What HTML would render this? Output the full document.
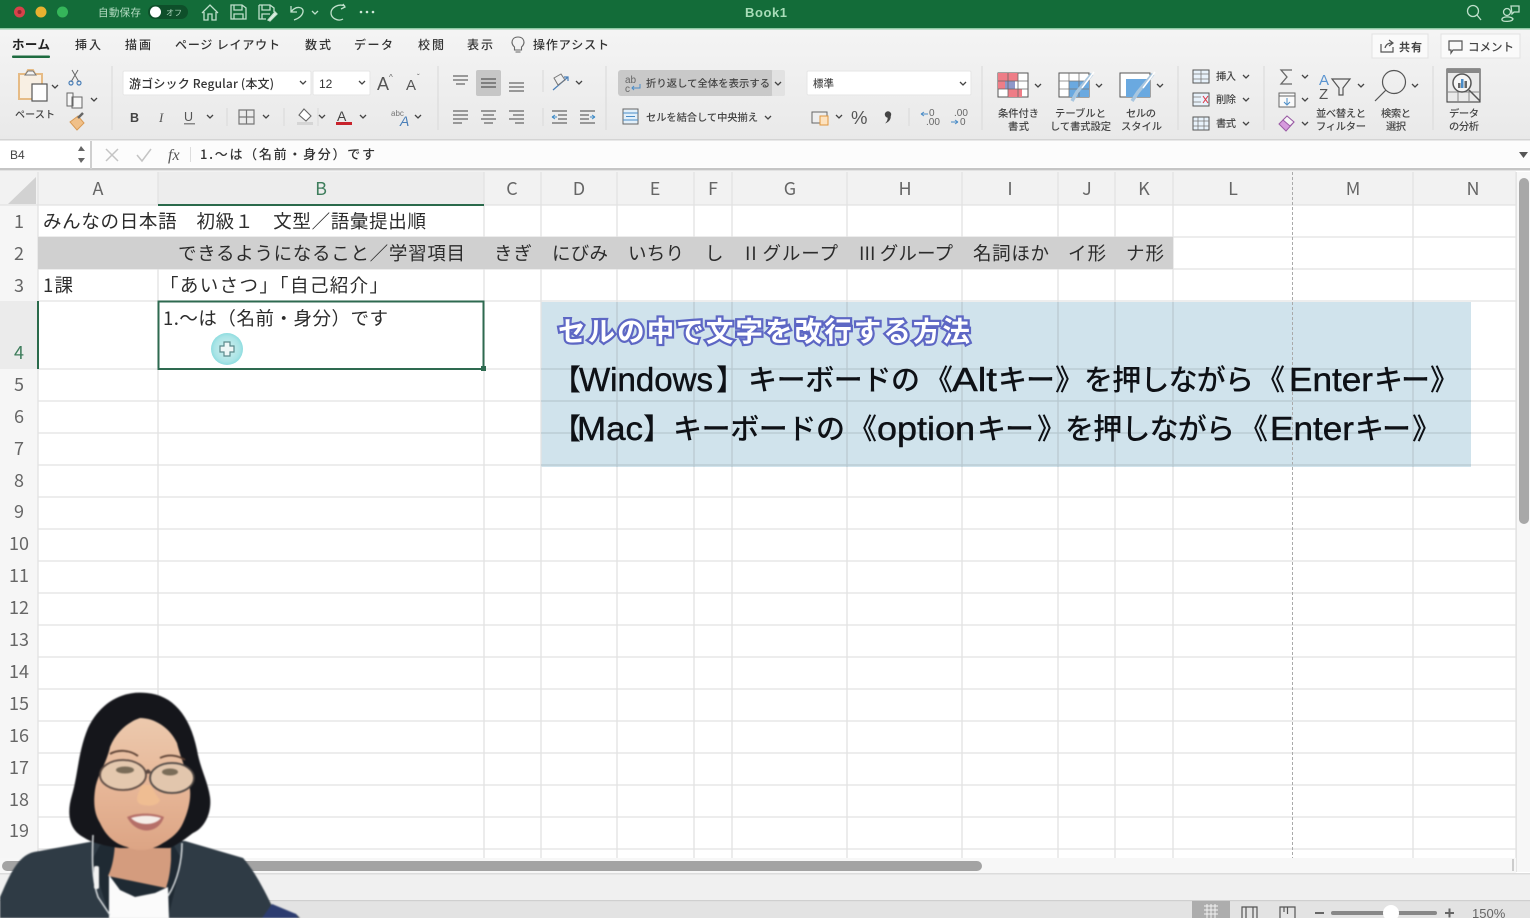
<!DOCTYPE html>
<html lang="ja"><head><meta charset="utf-8"><title>Book1</title>
<style>
html,body{margin:0;padding:0;width:1530px;height:918px;overflow:hidden;background:#fff}
svg{display:block;filter:blur(.35px)}
text{font-family:"Liberation Sans","Noto Sans CJK JP",sans-serif}
.jp,.jp text,.hd text,.rh text{font-family:"Noto Sans CJK JP","Liberation Sans",sans-serif}
.tab{font-size:12px;fill:#333;font-weight:500}
.cell{font-size:18.5px;fill:#2c2c2c}
.hd{font-size:18px;fill:#666;text-anchor:middle}
.rh{font-size:18px;fill:#666;text-anchor:middle}
.ov text{font-size:29px;fill:#0e1116;font-weight:500;font-family:"Noto Sans CJK JP",sans-serif}
.ov text.l{font-size:33px;font-weight:400;font-family:"Liberation Sans",sans-serif;stroke:#0e1116;stroke-width:.45}
.i{fill:none;stroke:#555;stroke-width:1.2}
.ch{fill:none;stroke:#444;stroke-width:1.3}
.g{stroke:#e2e2e2;stroke-width:1.3}
</style></head><body>
<svg width="1530" height="918" viewBox="0 0 1530 918" xmlns="http://www.w3.org/2000/svg">
<defs>
<linearGradient id="rb" x1="0" y1="0" x2="0" y2="1"><stop offset="0" stop-color="#f4f4f4"/><stop offset="1" stop-color="#e9e9e9"/></linearGradient>
<linearGradient id="face" x1="0" y1="0" x2="0" y2="1"><stop offset="0" stop-color="#ecc9ad"/><stop offset=".55" stop-color="#e6b596"/><stop offset="1" stop-color="#dca484"/></linearGradient>
<radialGradient id="cur"><stop offset="0" stop-color="#d5f0f0"/><stop offset=".8" stop-color="#a9e4e6"/><stop offset="1" stop-color="#8fdde0"/></radialGradient>
</defs>

<!-- title bar -->
<rect width="1530" height="28" fill="#136c39"/>
<rect y="28" width="1530" height="1.5" fill="#8fc9a5"/>
<circle cx="19.500" cy="12" r="5.500" fill="#d8424a"/><circle cx="19.500" cy="12" r="2" fill="#8e2730"/>
<circle cx="41" cy="12" r="5.500" fill="#e8b130"/>
<circle cx="62.500" cy="12" r="5.500" fill="#35b65a"/>
<text x="98" y="16" font-size="10.500" fill="#b5dcc3" textLength="43">自動保存</text>
<rect x="148" y="5" width="40" height="14" rx="7" fill="#0e4f2a"/>
<circle cx="155.500" cy="12" r="5.500" fill="#fff"/>
<text x="166" y="15.500" font-size="8" fill="#a9d3b9">オフ</text>
<g fill="none" stroke="#bfe0cb" stroke-width="1.300">
<path d="M202 13 L210 5 L218 13 M204 12 V20 H208 V14 H212 V20 H216 V12"/>
<path d="M231 5 H242 L246 8 V19 H231 Z M234 5 V10 H242 V5 M234 19 V14 H243 V19"/>
<path d="M259 5 H270 L274 8 V12 M259 5 V19 H266 M262 5 V10 H270 V5 M262 19 V14 H270"/>
<path d="M268 20 L275 12 L277 14 L270 21 Z" fill="#e6f2ea"/>
<path d="M291 6 V12 H297 M291 12 C296 5 304 7 303 12 C302 17 297 19 294 20"/>
<path d="M312 11 L315 14 L318 11"/>
<path d="M345 6 C338 3 331 8 331 13 C331 18 338 22 343 19 M343 4 L345 7 L341 9" />
</g>
<g fill="#cfe7d8"><circle cx="361" cy="12" r="1.300"/><circle cx="367" cy="12" r="1.300"/><circle cx="373" cy="12" r="1.300"/></g>
<text x="745" y="17" font-size="13" font-weight="700" fill="#a8dcb8" textLength="42">Book1</text>
<g fill="none" stroke="#bfe0cb" stroke-width="1.300">
<circle cx="1473" cy="11" r="5.500"/><path d="M1477 15 L1481 20"/>
<circle cx="1507" cy="12" r="3.500"/><path d="M1502 20 C1501 16 1512 16 1513 19 C1512 22 1503 22 1502 20 Z"/>
<path d="M1511 6 H1519 V12 H1514 L1512 14 Z"/>
</g>

<!-- ribbon -->
<rect y="29.500" width="1530" height="110" fill="url(#rb)"/>
<rect y="139" width="1530" height="1.500" fill="#d4d4d4"/>
<g class="jp">
<text x="12" y="49" font-size="12.500" font-weight="700" fill="#222" textLength="38">ホーム</text>
<text x="75" y="49" class="tab" textLength="26">挿入</text>
<text x="125" y="49" class="tab" textLength="26">描画</text>
<text x="175" y="49" class="tab" textLength="105">ページ レイアウト</text>
<text x="305" y="49" class="tab" textLength="26">数式</text>
<text x="354" y="49" class="tab" textLength="39">データ</text>
<text x="418" y="49" class="tab" textLength="26">校閲</text>
<text x="467" y="49" class="tab" textLength="26">表示</text>
<text x="533" y="49" class="tab" textLength="76">操作アシスト</text>
</g>
<rect x="12" y="55.500" width="38" height="2.500" rx="1" fill="#1e6b40"/>
<path d="M514.500 47 C510 43 512 37 518 37 C524 37 526 43 521.500 47 V50 H514.500 Z M515.500 52 H520.500" fill="none" stroke="#666" stroke-width="1.100"/>

<!-- share/comment -->
<rect x="1372" y="34" width="56" height="24" fill="#fafafa" stroke="#e2e2e2"/>
<rect x="1441" y="34" width="79" height="24" fill="#fafafa" stroke="#e2e2e2"/>
<path d="M1381 44 V52 H1393 V47 M1385 48 C1386 44 1389 43 1392 43 M1389 40 L1393 43 L1389 46" class="i"/>
<text x="1399" y="51" font-size="11" font-weight="600" fill="#444" textLength="23" class="jp">共有</text>
<path d="M1449 41 H1462 V50 H1453 L1451 53 V50 H1449 Z" class="i"/>
<text x="1468" y="51" font-size="11.500" font-weight="500" fill="#444" textLength="46" class="jp">コメント</text>

<!-- group separators -->
<g stroke="#dcdcdc" stroke-width="1.200">
<path d="M112 66 V130 M438 66 V130 M606 66 V130 M982 66 V130 M1178 66 V130 M1264 66 V130 M1433 66 V130"/>
<path d="M227 108 V126 M284 108 V126 M318 108 V126 M543 70 V92 M543 108 V126 M909 108 V126"/>
</g>

<!-- paste -->
<path d="M19 74 H26 L28 70 H33 L35 74 H42 V99 H19 Z" fill="#f8efe3" stroke="#e6bb85" stroke-width="2"/>
<path d="M25 75 L28 71 H33 L36 75 Z" fill="#f2f2f2" stroke="#777"/>
<rect x="32" y="84" width="15" height="17" fill="#fdfdfd" stroke="#555" stroke-width="1.200"/>
<path d="M52 85 L55 88 L58 85" class="ch"/>
<text x="15" y="118" font-size="10" font-weight="500" fill="#444" textLength="40" class="jp">ペースト</text>
<path d="M72 70 L79 82 M78 70 L71 82" stroke="#666" fill="none"/>
<circle cx="71" cy="83" r="2" fill="none" stroke="#4a7fb8" stroke-width="1.200"/><circle cx="79" cy="83" r="2" fill="none" stroke="#4a7fb8" stroke-width="1.200"/>
<path d="M67 93 H73 V106 H67 Z M72 97 H82 V108 H72 Z" fill="#f7f7f7" stroke="#666"/>
<path d="M91 98 L94 101 L97 98" class="ch"/>
<path d="M70 122 L78 116 L84 123 L77 130 Z" fill="#f0c089" stroke="#d89a55"/>
<path d="M78 118 L83 113" stroke="#666" stroke-width="2.500"/>

<!-- font boxes -->
<rect x="123" y="71" width="188" height="24" rx="1.500" fill="#fff" stroke="#e6e6e6"/>
<text x="129" y="88" font-size="12" font-weight="500" fill="#333" textLength="145" class="jp">游ゴシック Regular (本文)</text>
<path d="M300 81 L303 84 L306 81" class="ch"/>
<rect x="313" y="71" width="57" height="24" rx="1.500" fill="#fff" stroke="#e6e6e6"/>
<text x="319" y="88" font-size="12" fill="#333">12</text>
<path d="M359 81 L362 84 L365 81" class="ch"/>
<text x="377" y="90" font-size="18" fill="#555">A</text><text x="389" y="80" font-size="8" fill="#666">^</text>
<text x="406" y="90" font-size="15" fill="#555">A</text><text x="417" y="80" font-size="8" fill="#666">ˇ</text>

<text x="130" y="122" font-size="12.500" font-weight="700" fill="#444">B</text>
<text x="159" y="122" font-size="13" font-style="italic" fill="#555" style="font-family:'Liberation Serif',serif">I</text>
<text x="184" y="121" font-size="12.500" fill="#555">U</text><rect x="184" y="123" width="11" height="1.500" fill="#888"/>
<path d="M207 115 L210 118 L213 115" class="ch"/>
<path d="M239 110 H254 V124 H239 Z M246.500 110 V124 M239 117 H254" fill="none" stroke="#777" stroke-width="1.200"/>
<path d="M263 115 L266 118 L269 115" class="ch"/>
<path d="M304 109 L311 116 L306 121 L299 115 Z" fill="#fff" stroke="#666" stroke-width="1.100"/>
<rect x="297" y="122" width="16" height="3" fill="#d5d5d5"/>
<path d="M319 115 L322 118 L325 115" class="ch"/>
<text x="337" y="121" font-size="14" fill="#444">A</text><rect x="336" y="122" width="16" height="3" fill="#c8232c"/>
<path d="M360 115 L363 118 L366 115" class="ch"/>
<text x="391" y="116" font-size="8" fill="#777">abc</text>
<text x="400" y="126" font-size="14" font-style="italic" fill="#4a7fb8">A</text>
<path d="M415 115 L418 118 L421 115" class="ch"/>

<!-- align -->
<rect x="476" y="70" width="25" height="26" rx="2" fill="#c6c6c6"/>
<g stroke="#666" stroke-width="1.200">
<path d="M453 76 H468 M453 80 H468 M456 84 H465"/>
<path d="M481 79 H496 M481 83 H496 M481 87 H496" stroke="#555"/>
<path d="M509 83 H524 M509 87 H524 M509 91 H524"/>
<path d="M453 111 H468 M453 115 H468 M453 119 H468 M453 123 H462"/>
<path d="M481 111 H496 M483 115 H494 M481 119 H496 M484 123 H493"/>
<path d="M509 111 H524 M513 115 H524 M509 119 H524 M515 123 H524"/>
<path d="M552 111 H567 M558 115 H567 M558 119 H567 M552 123 H567"/>
<path d="M580 111 H595 M580 115 H589 M580 119 H589 M580 123 H595"/>
</g>
<path d="M552 117 H557 M552 117 L555 115 M552 117 L555 119 M590 117 H595 M595 117 L592 115 M595 117 L592 119" stroke="#3c8ac7" fill="none"/>
<path d="M553 90 L568 77 M564 77 H568 V81" stroke="#4a7fb8" fill="none" stroke-width="1.200"/>
<path d="M554 78 L561 74 L565 80 L558 85 Z" fill="none" stroke="#777"/>
<path d="M576 81 L579 84 L582 81" class="ch"/>

<!-- wrap -->
<rect x="618" y="70" width="156" height="26" rx="3" fill="#c9c9c9"/>
<rect x="772" y="70" width="13" height="26" rx="2" fill="#e2e2e2"/>
<text x="625" y="83" font-size="10" fill="#666">ab</text><text x="625" y="92" font-size="10" fill="#666">c</text>
<path d="M640 84 V88 H632 M634 86 L632 88 L634 90" stroke="#4a8cc7" fill="none"/>
<text x="646" y="87" font-size="10.300" font-weight="500" fill="#444" textLength="124" class="jp">折り返して全体を表示する</text>
<path d="M775 82 L778 85 L781 82" class="ch"/>
<rect x="623" y="109" width="15" height="15" fill="#e3f0fa" stroke="#666"/>
<path d="M623 113 H638 M623 120 H638 M626 116.500 H635" stroke="#4a8cc7" fill="none"/>
<text x="646" y="121" font-size="10.300" font-weight="500" fill="#444" textLength="112" class="jp">セルを結合して中央揃え</text>
<path d="M765 116 L768 119 L771 116" class="ch"/>

<!-- number -->
<rect x="807" y="71" width="164" height="24" rx="1.500" fill="#fff" stroke="#e6e6e6"/>
<text x="813" y="87" font-size="10.500" font-weight="500" fill="#444" class="jp">標準</text>
<path d="M960 82 L963 85 L966 82" class="ch"/>
<rect x="812" y="112" width="15" height="11" fill="#eee" stroke="#666"/>
<rect x="820" y="116" width="8" height="9" fill="#fde2bf" stroke="#e0963e"/>
<path d="M836 115 L839 118 L842 115" class="ch"/>
<text x="851" y="124" font-size="18.500" fill="#555">%</text>
<circle cx="888" cy="114.500" r="3.200" fill="#444"/><path d="M890.500 115 C891.500 119 889 122 885 123.500 C887.500 121 888 119 887.500 116 Z" fill="#444"/>
<text x="929" y="116" font-size="10" fill="#666">0</text><text x="926" y="125" font-size="10" fill="#666">.00</text>
<path d="M921 114 H928 M921 114 L924 112 M921 114 L924 116" stroke="#4a8cc7" fill="none"/>
<text x="954" y="116" font-size="10" fill="#666">.00</text><text x="960" y="125" font-size="10" fill="#666">0</text>
<path d="M951 122 H958 M958 122 L955 120 M958 122 L955 124" stroke="#4a8cc7" fill="none"/>

<!-- cond format -->
<rect x="998" y="73" width="30" height="24" fill="#fff" stroke="#555"/>
<rect x="998" y="73" width="20" height="8" fill="#ee7d87"/><rect x="1005" y="81" width="10" height="8" fill="#8e97c9"/><rect x="998" y="81" width="7" height="8" fill="#ee7d87"/>
<rect x="1008" y="89" width="14" height="8" fill="#ee7d87"/>
<path d="M998 81 H1028 M998 89 H1028 M1008 73 V97 M1018 73 V97" stroke="#666" fill="none" stroke-width=".8"/>
<path d="M1035 84 L1038 87 L1041 84" class="ch"/>
<g class="jp" font-size="10.300" font-weight="500" fill="#444">
<text x="998" y="117" textLength="41">条件付き</text><text x="1008" y="130" textLength="21">書式</text>
<text x="1055" y="117" textLength="51">テーブルと</text><text x="1050" y="130" textLength="61">して書式設定</text>
<text x="1126" y="117" textLength="30">セルの</text><text x="1121" y="130" textLength="41">スタイル</text>
<text x="1216" y="80" textLength="20">挿入</text><text x="1216" y="103" textLength="20">削除</text><text x="1216" y="127" textLength="20">書式</text>
<text x="1316" y="117" textLength="50">並べ替えと</text><text x="1316" y="130" textLength="50">フィルター</text>
<text x="1381" y="117" textLength="30">検索と</text><text x="1386" y="130" textLength="20">選択</text>
<text x="1449" y="117" textLength="30">データ</text><text x="1449" y="130" textLength="30">の分析</text>
</g>
<!-- table format -->
<rect x="1059" y="73" width="30" height="24" fill="#fff" stroke="#555"/>
<rect x="1069" y="81" width="20" height="16" fill="#6aa9e0"/>
<path d="M1059 81 H1089 M1059 89 H1089 M1069 73 V97 M1079 73 V97" stroke="#777" fill="none" stroke-width=".8"/>
<path d="M1092 74 L1077 92 L1072 101" stroke="#a8c6df" stroke-width="3.500" fill="none"/><path d="M1094 72 L1082 88" stroke="#fff" stroke-width="1.500" fill="none"/>
<path d="M1096 84 L1099 87 L1102 84" class="ch"/>
<!-- cell style -->
<rect x="1120" y="73" width="30" height="24" fill="#fff" stroke="#555"/>
<rect x="1126" y="79" width="24" height="18" fill="#6aa9e0"/>
<path d="M1153 74 L1138 92 L1132 101" stroke="#a8c6df" stroke-width="3.500" fill="none"/><path d="M1155 72 L1143 88" stroke="#fff" stroke-width="1.500" fill="none"/>
<path d="M1157 84 L1160 87 L1163 84" class="ch"/>
<!-- insert delete -->
<g fill="#e8f2fb" stroke="#555">
<rect x="1193" y="70" width="16" height="13"/><rect x="1193" y="93" width="16" height="13"/><rect x="1193" y="117" width="16" height="13"/>
</g>
<path d="M1193 74 H1209 M1193 79 H1209 M1201 70 V83 M1193 97 H1201 M1193 102 H1201 M1198 117 V130 M1204 117 V130 M1193 121 H1209 M1193 126 H1209" stroke="#777" fill="none" stroke-width=".8"/>
<path d="M1203 96 L1208 103 M1208 96 L1203 103" stroke="#d34" fill="none"/>
<path d="M1243 75 L1246 78 L1249 75 M1243 98 L1246 101 L1249 98 M1243 122 L1246 125 L1249 122" class="ch"/>
<!-- sum etc -->
<path d="M1292 70 H1281 L1287 77 L1281 84 H1292" fill="none" stroke="#666" stroke-width="1.300"/>
<path d="M1302 75 L1305 78 L1308 75 M1302 98 L1305 101 L1308 98 M1302 122 L1305 125 L1308 122" class="ch"/>
<rect x="1279" y="93" width="16" height="14" fill="#fafafa" stroke="#666"/>
<path d="M1279 96 H1295" stroke="#666"/><path d="M1287 98 V104 M1284 102 L1287 105 L1290 102" stroke="#4a8cc7" fill="none"/>
<path d="M1279 124 L1287 116 L1294 122 L1286 131 Z" fill="#d69add" stroke="#9a5aa5"/>
<path d="M1287 116 L1294 122 L1290 126 L1283 120 Z" fill="#f6f6f6" stroke="#9a5aa5"/>
<text x="1319" y="85" font-size="15" fill="#5a94d0">A</text><text x="1319" y="99" font-size="15" fill="#555">Z</text>
<path d="M1332 79 H1350 L1343 88 V95 H1339 V88 Z" fill="none" stroke="#555" stroke-width="1.200"/>
<path d="M1358 84 L1361 87 L1364 84" class="ch"/>
<circle cx="1394" cy="82" r="11.500" fill="none" stroke="#555" stroke-width="1.200"/>
<path d="M1386 90 L1375 101" stroke="#555" stroke-width="1.200"/>
<path d="M1412 84 L1415 87 L1418 84" class="ch"/>
<rect x="1447" y="69" width="33" height="33" fill="#eaeaea" stroke="#444" stroke-width="1.100"/>
<rect x="1447" y="69" width="33" height="4" fill="#888"/>
<path d="M1447 92 H1480 M1458 90 V102 M1469 90 V102" stroke="#888" fill="none"/>
<circle cx="1462" cy="83" r="9" fill="#f5f5f5" stroke="#555" stroke-width="1.500"/>
<rect x="1458" y="83" width="2.500" height="5" fill="#666"/><rect x="1461" y="79" width="2.500" height="9" fill="#4a8cc7"/><rect x="1464.500" y="81" width="2.500" height="7" fill="#666"/>
<path d="M1469 90 L1480 101" stroke="#555" stroke-width="1.500"/>

<!-- formula bar -->
<rect y="140.500" width="1530" height="27" fill="#fcfcfc"/>
<rect y="168" width="1530" height="2.500" fill="#c5c5c5"/>
<rect x="0" y="141" width="90" height="27" fill="#fff"/>
<rect x="90" y="141" width="2" height="28" fill="#cfcfcf"/>
<text x="10" y="159" font-size="12" fill="#444">B4</text>
<path d="M78 151 L81 146 L85 151 Z M78 158 L85 158 L81 163 Z" fill="#666"/>
<path d="M106 149 L118 161 M118 149 L106 161" stroke="#c4c4c4" stroke-width="1.500" fill="none"/>
<path d="M137 155 L142 161 L151 149" stroke="#c4c4c4" stroke-width="1.500" fill="none"/>
<text x="168" y="160" font-size="16" font-style="italic" fill="#555" style="font-family:'Liberation Serif',serif">fx</text>
<rect x="190" y="147" width="1" height="15" fill="#ddd"/>
<text x="200" y="159" font-size="13" font-weight="500" fill="#333" textLength="175" class="jp">1.～は（名前・身分）です</text>
<path d="M1519 152 H1528 L1523.500 158 Z" fill="#555"/>

<!-- header rows -->
<rect y="171" width="1516" height="34" fill="#f2f2f2"/>
<rect x="0" y="205" width="38" height="660" fill="#f6f6f6"/>
<rect x="158" y="172" width="326" height="33" fill="#ededed"/>
<rect x="0" y="301" width="38" height="68" fill="#ebebeb"/>
<path d="M8 204 L36 177 V204 Z" fill="#d2d2d2"/>

<!-- cells -->
<rect x="38" y="205" width="1478" height="655" fill="#fff"/>
<rect x="541" y="302" width="930" height="165" fill="#d0e3ec"/>

<!-- gridlines -->
<g class="g">
<path d="M0 205 H1516 M38 237 H1516 M38 269 H1516 M38 301 H1516 M38 369 H1516 M38 401 H1516 M38 433 H1516 M38 465 H1516 M38 497 H1516 M38 529 H1516 M38 561 H1516 M38 593 H1516 M38 625 H1516 M38 657 H1516 M38 689 H1516 M38 721 H1516 M38 753 H1516 M38 785 H1516 M38 817 H1516 M38 849 H1516"/>
<path d="M38 172 V860 M158 172 V205 M158 237 V860 M484 172 V860 M541 172 V860 M617 172 V860 M694 172 V860 M732 172 V860 M847 172 V860 M962 172 V860 M1058 172 V860 M1115 172 V860 M1173 172 V860 M1413 172 V860 M1516 172 V860"/>
</g>
<path d="M1292.500 172 V860" stroke="#aaa" stroke-dasharray="3 2" stroke-width="1"/>
<rect x="38" y="237" width="1135" height="32" fill="#d0d0d0"/>
<g stroke="#b5c8d1" stroke-width="1.200"><path d="M541 369 H1471 M541 401 H1471 M541 433 H1471 M541 465 H1471"/></g>
<g stroke="#b5c8d1" stroke-width="1.200"><path d="M617 302 V467 M694 302 V467 M732 302 V467 M847 302 V467 M962 302 V467 M1058 302 V467 M1115 302 V467 M1173 302 V467 M1413 302 V467"/></g>

<!-- col headers -->
<g class="hd">
<text x="98" y="195">A</text><text x="321" y="195" style="fill:#3e7d5c">B</text><text x="512" y="195">C</text><text x="579" y="195">D</text><text x="655" y="195">E</text><text x="713" y="195">F</text><text x="790" y="195">G</text><text x="905" y="195">H</text><text x="1010" y="195">I</text><text x="1087" y="195">J</text><text x="1144" y="195">K</text><text x="1233" y="195">L</text><text x="1353" y="195">M</text><text x="1473" y="195">N</text>
</g>
<rect x="158" y="204" width="326" height="2" fill="#2a6a4b"/>
<!-- row headers -->
<g class="rh">
<text x="19" y="228">1</text><text x="19" y="260">2</text><text x="19" y="292">3</text><text x="19" y="359" style="fill:#3e7d5c">4</text><text x="19" y="391">5</text><text x="19" y="423">6</text><text x="19" y="455">7</text><text x="19" y="487">8</text><text x="19" y="518">9</text><text x="19" y="550">10</text><text x="19" y="582">11</text><text x="19" y="614">12</text><text x="19" y="646">13</text><text x="19" y="678">14</text><text x="19" y="710">15</text><text x="19" y="742">16</text><text x="19" y="774">17</text><text x="19" y="806">18</text><text x="19" y="837">19</text>
</g>
<rect x="37" y="301" width="2" height="68" fill="#2a6a4b"/>

<!-- cell text -->
<g class="jp">
<text x="43" y="228" class="cell" textLength="383">みんなの日本語　初級１　文型／語彙提出順</text>
<text x="178" y="260" class="cell" textLength="287">できるようになること／学習項目</text>
<text x="494" y="260" class="cell" textLength="38">きぎ</text>
<text x="552" y="260" class="cell" textLength="56">にびみ</text>
<text x="628" y="260" class="cell" textLength="56">いちり</text>
<text x="705" y="260" class="cell" textLength="18">し</text>
<text x="745" y="260" class="cell" textLength="93">II グループ</text>
<text x="859" y="260" class="cell" textLength="94">III グループ</text>
<text x="973" y="260" class="cell" textLength="76">名詞ほか</text>
<text x="1068" y="260" class="cell" textLength="38">イ形</text>
<text x="1126" y="260" class="cell" textLength="38">ナ形</text>
<text x="43" y="292" class="cell" textLength="30">1課</text>
<text x="160" y="292" class="cell" textLength="228">「あいさつ」「自己紹介」</text>
<text x="163" y="325" class="cell" textLength="225">1.～は（名前・身分）です</text>
</g>

<!-- selection -->
<rect x="158.500" y="301.500" width="325" height="67.500" fill="none" stroke="#2e6a50" stroke-width="2"/>
<rect x="481" y="366" width="5" height="5" fill="#2e6a50"/>
<circle cx="227" cy="349" r="16" fill="url(#cur)"/>
<path d="M224 342 H230 V346 H234 V352 H230 V356 H224 V352 H220 V346 H224 Z" fill="#eef6f6" stroke="#5b8a8c" stroke-width="1.200"/>

<!-- overlay text -->
<text x="558" y="341" font-size="27.500" font-weight="700" fill="#fff" stroke="#5d67c4" stroke-width="4.500" paint-order="stroke" textLength="412" class="jp">セルの中で文字を改行する方法</text>
<g class="ov">
<text x="552" y="390">【</text>
<text class="l" x="579" y="391" textLength="134" lengthAdjust="spacingAndGlyphs">Windows</text>
<text x="716" y="390">】</text>
<text x="748" y="390" textLength="172">キーボードの</text>
<text x="924" y="390">《</text>
<text class="l" x="952" y="391" textLength="45" lengthAdjust="spacingAndGlyphs">Alt</text>
<text x="998" y="390" textLength="57">キー</text>
<text x="1055" y="390">》</text>
<text x="1084" y="390" textLength="170">を押しながら</text>
<text x="1256" y="390">《</text>
<text class="l" x="1289" y="391" textLength="84" lengthAdjust="spacingAndGlyphs">Enter</text>
<text x="1374" y="390" textLength="56">キー</text>
<text x="1430" y="390">》</text>

<text x="552" y="439">【</text>
<text class="l" x="577" y="440" textLength="66" lengthAdjust="spacingAndGlyphs">Mac</text>
<text x="643" y="439">】</text>
<text x="673" y="439" textLength="172">キーボードの</text>
<text x="848" y="439">《</text>
<text class="l" x="877" y="440" textLength="98" lengthAdjust="spacingAndGlyphs">option</text>
<text x="977" y="439" textLength="57">キー</text>
<text x="1037" y="439">》</text>
<text x="1065" y="439" textLength="170">を押しながら</text>
<text x="1239" y="439">《</text>
<text class="l" x="1270" y="440" textLength="84" lengthAdjust="spacingAndGlyphs">Enter</text>
<text x="1355" y="439" textLength="56">キー</text>
<text x="1412" y="439">》</text>
</g>

<!-- v scroll -->
<rect x="1516" y="172" width="14" height="700" fill="#f7f7f7"/>
<rect x="1516" y="172" width="1" height="700" fill="#e4e4e4"/>
<rect x="1519" y="178" width="10" height="346" rx="5" fill="#a8a8a8"/>

<!-- h scroll & status -->
<rect y="858" width="1516" height="15" fill="#f7f7f7"/>
<rect x="1512" y="859" width="2" height="12" fill="#ccc"/>
<rect y="873" width="1530" height="1.500" fill="#dcdcdc"/>
<rect x="2" y="861" width="980" height="10" rx="5" fill="#a3a3a3"/>
<rect y="874.500" width="1530" height="27" fill="#f0f0f0"/>
<rect y="900" width="1530" height="18" fill="#e3e3e3"/>
<rect y="900" width="1530" height="1.200" fill="#cfcfcf"/>
<rect x="1192" y="901" width="38" height="17" fill="#adadad"/>
<g fill="none" stroke="#f2f2f2" stroke-width="1"><path d="M1204 906 H1218 M1204 910 H1218 M1204 914 H1218 M1207 904 V918 M1211 904 V918 M1215 904 V918"/></g>
<path d="M1242 918 V907 H1257 V918 M1246 907 V918 M1253 907 V918" class="i" stroke="#777"/>
<path d="M1280 918 V907 H1295 V918 M1287.500 907 V914 M1284 907 V912" class="i" stroke="#777"/>
<rect x="1315" y="912" width="9" height="2" fill="#666"/>
<rect x="1331" y="911" width="106" height="4" rx="2" fill="#888"/>
<circle cx="1391" cy="913" r="8" fill="#fff"/>
<path d="M1445 913 H1454 M1449.500 908.500 V917.500" stroke="#666" stroke-width="2"/>
<text x="1472" y="918" font-size="13" fill="#666">150%</text>

<!-- person -->
<g style="filter:blur(.9px)">
<path d="M0 918 L0 897 C8 880 16 856 34 852 L95 841 H185 L243 858 C256 873 264 890 272 906 L296 914 L300 918 Z" fill="#2f3b45"/>
<path d="M272 904 L296 914 L298 918 H262 Z" fill="#2c3c70"/>
<path d="M100 845 L92 860 L110 918 H168 L182 860 L172 842 Z" fill="#1f2a33"/>
<path d="M115 838 H171 V860 C170 875 168 882 166 888 L108 876 C112 868 115 855 115 838 Z" fill="#d49c7e"/>
<path d="M109 875 L120 890 L135 897 L155 893 L168 887 L169 918 H109 Z" fill="#fbfbfb"/>
<!-- hair -->
<path d="M147 693 C122 690 100 703 88 728 C78 752 78 775 72 795 C66 815 70 830 83 837 C92 843 105 846 120 848 H170 C182 842 186 838 193 833 C205 828 212 812 210 797 C208 782 200 768 197 750 C190 715 172 695 147 693 Z" fill="#15161b"/>
<!-- face -->
<path d="M140 718 C128 722 116 732 110 747 C106 765 97 775 95 790 C93 805 95 815 100 823 C106 836 115 844 127 847 C135 851 150 852 163 843 C172 838 179 832 183 823 C188 812 191 800 190 790 C188 772 181 760 177 743 C170 728 155 718 140 718 Z" fill="url(#face)"/>
<path d="M110 754 C118 749 130 750 138 756 M160 758 C168 754 178 755 185 760" stroke="#5a3f32" stroke-width="1.800" fill="none"/>
<ellipse cx="123" cy="775" rx="23" ry="15" fill="#e4c8ae" stroke="#5c4a42" stroke-width="1.800"/>
<ellipse cx="172" cy="778" rx="22" ry="15" fill="#e2c6ad" stroke="#4c4542" stroke-width="1.800"/>
<path d="M146 773 C149 770 147 770 150 773" stroke="#5c4a42" stroke-width="3" fill="none"/>
<ellipse cx="125" cy="770" rx="9" ry="3.500" fill="#7a6c58"/><ellipse cx="170" cy="772" rx="8" ry="3.500" fill="#7a6c58"/>
<path d="M142 785 C137 795 135 801 140 804 C148 807 158 806 160 800 C156 795 153 790 151 785 Z" fill="#efbd92"/>
<path d="M127 817 C138 812 155 813 164 817 C158 835 136 835 127 817 Z" fill="#b56f68"/>
<path d="M131 818 C140 815 152 815 161 818 C155 826 138 826 131 818 Z" fill="#f5ede8"/>
<path d="M93 835 C92 860 92 880 98 897 L110 915" stroke="#dfe3e5" stroke-width="1.500" fill="none"/>
<rect x="94" y="866" width="5" height="23" rx="2" fill="#f2f2f2"/>
<path d="M182 843 C182 860 178 880 168 896" stroke="#dfe3e5" stroke-width="1.500" fill="none"/>
</g>
</svg>
</body></html>
